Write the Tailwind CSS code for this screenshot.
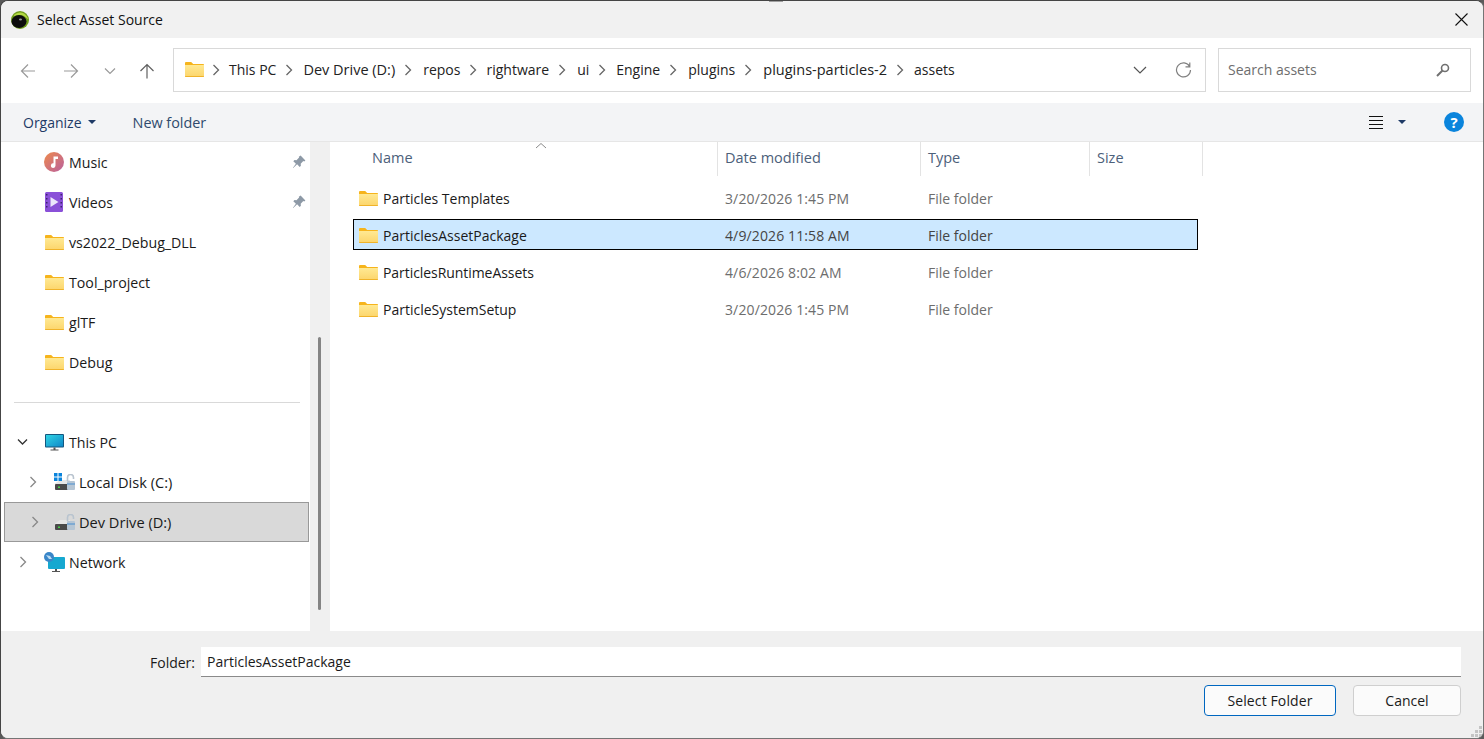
<!DOCTYPE html>
<html lang="en">
<head>
  <meta charset="UTF-8" />
  <title>Select Asset Source</title>
  <script src="https://cdn.jsdelivr.net/npm/@tailwindcss/browser@4"></script>
</head>
<body class="bg-[#5a5a5a] overflow-hidden font-['Open_Sans',sans-serif] text-[14px] text-[#1a1a1a]">
  <svg width="0" height="0" class="absolute">
    <defs>
      <linearGradient id="folderFill" x1="0" y1="0" x2="0" y2="1">
        <stop offset="0" stop-color="#ffe993" />
        <stop offset="1" stop-color="#fcd56b" />
      </linearGradient>
      <symbol id="folder" viewBox="0 0 19 15">
        <path d="M0 1.2C0 .5.5 0 1.2 0h5l2 2H18c.6 0 1 .4 1 1v1H0z" fill="#f6b41c" />
        <path d="M0 3h19v11c0 .6-.4 1-1 1H1c-.6 0-1-.4-1-1z" fill="url(#folderFill)" />
        <path d="M0 14h19v.2c0 .5-.4.8-.8.8H.8c-.4 0-.8-.3-.8-.8z" fill="#f0b32a" />
      </symbol>
      <symbol id="pin" viewBox="0 0 14 14">
        <path d="M8.6.6l4.8 4.8-1.2 1-.9-.3-2.6 2.6.2 2-1.2 1.2-2.6-2.6L1 13.2.8 13l3.1-4.2L1.300 6.200l1.200-1.200 2 .2 2.600-2.600-.300-.900z" fill="#8d99a6" />
      </symbol>
      <symbol id="chev" viewBox="0 0 10 14">
        <path d="M2.500 2l5 5-5 5" fill="none" stroke="currentColor" stroke-width="1.300" />
      </symbol>
      <symbol id="drive" viewBox="0 0 20 17">
        <path d="M0 9.500L5 6h10v9.500H0z" fill="#e6e6e6" />
        <rect x="0" y="10" width="17" height="6" rx="1" fill="#4a4a4a" />
        <rect x="3" y="12.500" width="2" height="1.500" fill="#46d246" />
        <path d="M12.500 7V3.500a3 3 0 0 1 6 0V5" fill="none" stroke="#b9c4cf" stroke-width="1.600" />
        <rect x="12" y="7" width="8" height="9" rx="1" fill="#b5c5d4" />
        <rect x="12" y="9.500" width="8" height="1" fill="#4a90d0" />
      </symbol>
    </defs>
  </svg>

  <div class="w-[1484px] h-[739px] flex flex-col rounded-lg overflow-hidden border border-[#757575] border-l-[#454545] border-t-[#454545] bg-[#f0f0f0] relative">
    <!-- title bar -->
    <div class="h-[37px] shrink-0 flex items-center pl-[10px] pr-[15px] bg-[#f1f1f1]">
      <svg width="18" height="18" viewBox="0 0 18 18">
        <circle cx="9" cy="9" r="9" fill="#6f9c1c" />
        <path d="M3 4a8.500 8.500 0 0 1 14 3.500c.5 2-3-3.500-8-3.500S3 6 3 4z" fill="#b4d944" />
        <ellipse cx="8" cy="10.500" rx="7.500" ry="6.500" fill="#0d0d0d" />
        <ellipse cx="9.500" cy="8.500" rx="1.500" ry="1" fill="#9a9a9a" />
      </svg>
      <span class="ml-[8px] text-[#111]">Select Asset Source</span>
      <svg class="ml-auto" width="13" height="13" viewBox="0 0 13 13"><path d="M.5.500l12 12M12.500.500l-12 12" stroke="#111" stroke-width="1.100" /></svg>
    </div>

    <!-- nav bar -->
    <div class="h-[65px] shrink-0 bg-white flex items-center pl-[19px] pr-[12px]">
      <svg width="16" height="16" viewBox="0 0 16 16"><path d="M15 8H1.500M8 1.500L1.500 8 8 14.500" fill="none" stroke="#9a9a9a" stroke-width="1.200" /></svg>
      <svg class="ml-[27px]" width="16" height="16" viewBox="0 0 16 16"><path d="M1 8h13.500M8 1.500L14.500 8 8 14.500" fill="none" stroke="#9a9a9a" stroke-width="1.200" /></svg>
      <svg class="ml-[25px]" width="12" height="8" viewBox="0 0 12 8"><path d="M1 1.500l5 5 5-5" fill="none" stroke="#9a9a9a" stroke-width="1.200" /></svg>
      <svg class="ml-[23px]" width="16" height="16" viewBox="0 0 16 16"><path d="M8 15.500V1.500M1.500 8L8 1.500 14.500 8" fill="none" stroke="#5f5f5f" stroke-width="1.200" /></svg>

      <div class="ml-[18px] mb-px w-[1033px] h-[44px] border border-[#d9d9d9] flex items-center pl-[11px] pb-px">
        <svg width="19" height="15"><use href="#folder" /></svg>
        <div class="flex items-center text-[#222] leading-[21px]">
          <svg class="ml-[7px] mr-[8px] text-[#666]" width="10" height="14"><use href="#chev" /></svg><span>This PC</span>
          <svg class="ml-[8px] mr-[9px] text-[#666]" width="10" height="14"><use href="#chev" /></svg><span class="text-[14.500px] leading-[21px]">Dev Drive (D:)</span>
          <svg class="ml-[8px] mr-[10px] text-[#666]" width="10" height="14"><use href="#chev" /></svg><span>repos</span>
          <svg class="ml-[8px] mr-[8px] text-[#666]" width="10" height="14"><use href="#chev" /></svg><span>rightware</span>
          <svg class="ml-[8px] mr-[10px] text-[#666]" width="10" height="14"><use href="#chev" /></svg><span>ui</span>
          <svg class="ml-[8px] mr-[9px] text-[#666]" width="10" height="14"><use href="#chev" /></svg><span>Engine</span>
          <svg class="ml-[8px] mr-[10px] text-[#666]" width="10" height="14"><use href="#chev" /></svg><span>plugins</span>
          <svg class="ml-[8px] mr-[10px] text-[#666]" width="10" height="14"><use href="#chev" /></svg><span class="text-[14.500px] leading-[21px]">plugins-particles-2</span>
          <svg class="ml-[8px] mr-[9px] text-[#666]" width="10" height="14"><use href="#chev" /></svg><span>assets</span>
        </div>
        <svg class="ml-auto" width="14" height="8" viewBox="0 0 14 8"><path d="M1 1l6 6 6-6" fill="none" stroke="#555" stroke-width="1.200" /></svg>
        <svg class="ml-[28px] mr-[13px]" width="17" height="17" viewBox="0 0 17 17"><path d="M14.800 1.500v4.300h-4.300M14.600 5.500A7 7 0 1 0 15.500 9" fill="none" stroke="#808080" stroke-width="1.200" /></svg>
      </div>

      <div class="ml-[12px] mb-px w-[253px] h-[44px] border border-[#d9d9d9] flex items-center pl-[9px] pr-[20px] pb-px text-[#6e6e6e]">
        <span>Search assets</span>
        <svg class="ml-auto" width="14" height="14" viewBox="0 0 14 14"><circle cx="9" cy="5" r="3.500" fill="none" stroke="#707070" stroke-width="1.600" /><path d="M6.500 7.500L1 13" stroke="#707070" stroke-width="2" /></svg>
      </div>
    </div>

    <!-- toolbar -->
    <div class="h-[39px] shrink-0 bg-[#f3f4f6] border-b border-[#e6e6e6] flex items-center pl-[22px] pr-[19px]">
      <span class="text-[#1e3a66]">Organize</span>
      <span class="ml-[6px] w-0 h-0 border-x-[4px] border-x-transparent border-t-[4px] border-t-[#1e3a66]"></span>
      <span class="ml-[37px] text-[14.400px] leading-[21px] text-[#2f4a6d]">New folder</span>
      <div class="ml-auto flex items-center">
        <svg width="14" height="13" viewBox="0 0 14 13"><path d="M0 .500h14M0 4.500h14M0 8.500h14M0 12.500h14" stroke="#111" /></svg>
        <span class="ml-[15px] w-0 h-0 border-x-[4px] border-x-transparent border-t-[4px] border-t-[#1e3a66]"></span>
        <span class="ml-[38px] w-5 h-5 rounded-full bg-[#0a84dc] text-white text-[15px] leading-5 font-bold text-center">?</span>
      </div>
    </div>

    <!-- body -->
    <div class="flex-1 flex min-h-0 bg-white">
      <!-- sidebar -->
      <div class="w-[309px] shrink-0 pl-[3px] flex flex-col text-[14.200px] leading-[21px]">
        <div class="h-10 flex items-center pl-[40px] pr-[4px]">
          <svg width="20" height="20" viewBox="0 0 20 20">
            <defs><linearGradient id="music" x1="0" y1="0" x2="1" y2="1"><stop offset="0" stop-color="#ee8a4c" /><stop offset="1" stop-color="#b9609f" /></linearGradient></defs>
            <circle cx="10" cy="10" r="10" fill="url(#music)" />
            <path d="M9.500 4.500h4.500v2.500h-2.500v6.500a2.300 2.300 0 1 1-2-2.200z" fill="#fff" />
          </svg>
          <span class="ml-[5px]">Music</span>
          <svg class="ml-auto" width="14" height="14"><use href="#pin" /></svg>
        </div>
        <div class="h-10 flex items-center pl-[41px] pr-[4px]">
          <svg width="18" height="20" viewBox="0 0 18 20">
            <rect width="18" height="20" rx="1.500" fill="#8a50d8" />
            <path d="M1 2h1.500v1.500H1zM1 6h1.500v1.500H1zM1 10h1.500v1.500H1zM1 14h1.500v1.500H1zM15.500 2H17v1.500h-1.500zM15.500 6H17v1.500h-1.500zM15.500 10H17v1.500h-1.500zM15.500 14H17v1.500h-1.500z" fill="#3c2470" />
            <path d="M5.500 5l8 5-8 5z" fill="#ece6fb" />
          </svg>
          <span class="ml-[6px]">Videos</span>
          <svg class="ml-auto" width="14" height="14"><use href="#pin" /></svg>
        </div>
        <div class="h-10 flex items-center pl-[41px]"><svg width="19" height="15"><use href="#folder" /></svg><span class="ml-[5px]">vs2022_Debug_DLL</span></div>
        <div class="h-10 flex items-center pl-[41px]"><svg width="19" height="15"><use href="#folder" /></svg><span class="ml-[5px]">Tool_project</span></div>
        <div class="h-10 flex items-center pl-[41px]"><svg width="19" height="15"><use href="#folder" /></svg><span class="ml-[5px]">glTF</span></div>
        <div class="h-10 flex items-center pl-[41px]"><svg width="19" height="15"><use href="#folder" /></svg><span class="ml-[5px]">Debug</span></div>
        <div class="h-10 flex items-center pl-[10px] pr-[10px]"><div class="h-px w-full bg-[#d9d9d9]"></div></div>
        <div class="h-10 flex items-center pl-[12px]">
          <svg width="13" height="8" viewBox="0 0 13 8"><path d="M2 1.500l4.500 4.500L11 1.500" fill="none" stroke="#333" stroke-width="1.300" /></svg>
          <svg class="ml-[16px]" width="19" height="17" viewBox="0 0 19 17">
            <defs><linearGradient id="screen" x1="0" y1="0" x2="1" y2="1"><stop offset="0" stop-color="#2fd4e4" /><stop offset="1" stop-color="#1088c8" /></linearGradient></defs>
            <rect width="19" height="13.500" rx="1" fill="#14577f" />
            <rect x="1" y="1" width="17" height="11.500" fill="url(#screen)" />
            <path d="M8.500 13.500h2v2h3v1h-8v-1h3z" fill="#555" />
          </svg>
          <span class="ml-[5px]">This PC</span>
        </div>
        <div class="h-10 flex items-center pl-[24px]">
          <svg class="text-[#888]" width="10" height="14"><use href="#chev" /></svg>
          <div class="ml-[17px] relative w-[20px] h-[17px]">
            <svg width="20" height="17"><use href="#drive" /></svg>
            <svg class="absolute -left-[1px] -top-[1px]" width="8" height="8" viewBox="0 0 8 8"><path d="M0 0h3.500v3.500H0zM4.500 0H8v3.500H4.500zM0 4.500h3.500V8H0zM4.500 4.500H8V8H4.500z" fill="#0a84dc" /></svg>
          </div>
          <span class="ml-[4px] text-[14.600px] leading-[21px]">Local Disk (C:)</span>
        </div>
        <div class="h-10 flex items-center pl-[23px] mr-px bg-[#d9d9d9] border border-[#999]">
          <svg class="ml-[2px] text-[#888]" width="10" height="14"><use href="#chev" /></svg>
          <svg class="ml-[15px]" width="20" height="17"><use href="#drive" /></svg>
          <span class="ml-[4px] text-[14.600px] leading-[21px]">Dev Drive (D:)</span>
        </div>
        <div class="h-10 flex items-center pl-[14px]">
          <svg class="text-[#888]" width="10" height="14"><use href="#chev" /></svg>
          <svg class="ml-[16px]" width="21" height="21" viewBox="0 0 21 21">
            <rect x="4" y="5" width="17" height="12" rx="1" fill="#16a8d0" />
            <path d="M11 17h2v2h3v1H8v-1h3z" fill="#555" />
            <circle cx="5" cy="5" r="5" fill="#3a86c8" />
            <path d="M2 3l4 1 2 3-3 0z" fill="#bcdcf2" />
          </svg>
          <span class="ml-[4px]">Network</span>
        </div>
      </div>

      <!-- sidebar scrollbar -->
      <div class="w-5 shrink-0 bg-[#f0f0f0] pt-[195px] pl-[8px] pb-[20px]">
        <div class="w-[3px] h-[273px] bg-[#858585] rounded-full"></div>
      </div>

      <!-- file list -->
      <div class="flex-1 min-w-0 pl-[23px] relative">
        <svg class="absolute left-[205px] top-0" width="12" height="7" viewBox="0 0 12 7"><path d="M1 6l5-4.500L11 6" fill="none" stroke="#8a8a8a" /></svg>
        <div class="h-[34px] flex text-[#4c607a] text-[14.500px]">
          <div class="w-[365px] pl-[19px] pb-[2px] border-r border-[#e3e3e3] flex items-center">Name</div>
          <div class="w-[203px] pl-[7px] pb-[2px] border-r border-[#e3e3e3] flex items-center">Date modified</div>
          <div class="w-[169px] pl-[7px] pb-[2px] border-r border-[#e3e3e3] flex items-center">Type</div>
          <div class="w-[113px] pl-[7px] pb-[2px] border-r border-[#e3e3e3] flex items-center">Size</div>
        </div>
        <div class="mt-[6px] flex flex-col gap-[6px] w-[845px]">
          <div class="h-[31px] pt-px flex items-center pl-[5px] border border-transparent">
            <svg width="19" height="15"><use href="#folder" /></svg>
            <span class="ml-[5px] w-[342px]">Particles Templates</span>
            <span class="w-[203px] text-[#6d6d6d] tracking-[0.120px]">3/20/2026 1:45 PM</span>
            <span class="text-[#6d6d6d]">File folder</span>
          </div>
          <div class="h-[31px] pt-px flex items-center pl-[5px] border border-black bg-[#cce8ff]">
            <svg width="19" height="15"><use href="#folder" /></svg>
            <span class="ml-[5px] w-[342px]">ParticlesAssetPackage</span>
            <span class="w-[203px] text-[#444] tracking-[0.120px]">4/9/2026 11:58 AM</span>
            <span class="text-[#444]">File folder</span>
          </div>
          <div class="h-[31px] pt-px flex items-center pl-[5px] border border-transparent">
            <svg width="19" height="15"><use href="#folder" /></svg>
            <span class="ml-[5px] w-[342px] tracking-[-0.060px]">ParticlesRuntimeAssets</span>
            <span class="w-[203px] text-[#6d6d6d] tracking-[0.120px]">4/6/2026 8:02 AM</span>
            <span class="text-[#6d6d6d]">File folder</span>
          </div>
          <div class="h-[31px] pt-px flex items-center pl-[5px] border border-transparent">
            <svg width="19" height="15"><use href="#folder" /></svg>
            <span class="ml-[5px] w-[342px]">ParticleSystemSetup</span>
            <span class="w-[203px] text-[#6d6d6d] tracking-[0.120px]">3/20/2026 1:45 PM</span>
            <span class="text-[#6d6d6d]">File folder</span>
          </div>
        </div>
      </div>
    </div>

    <!-- bottom panel -->
    <div class="h-[107px] shrink-0 bg-[#f0f0f0] pt-[16px] pr-[22px] flex flex-col">
      <div class="flex items-center justify-end">
        <span>Folder:</span>
        <div class="ml-[6px] w-[1260px] h-[30px] bg-white border-b border-[#8a8a8a] pl-[6px] flex items-center">ParticlesAssetPackage</div>
      </div>
      <div class="mt-[8px] flex justify-end gap-[17px]">
        <div class="w-[132px] h-[31px] bg-[#fbfbfb] border border-[#0067c0] rounded-[4px] flex items-center justify-center tracking-[0.120px]">Select Folder</div>
        <div class="w-[108px] h-[31px] bg-[#fbfbfb] border border-[#cfcfcf] rounded-[4px] flex items-center justify-center">Cancel</div>
      </div>
    </div>

    <!-- resize grip -->
    <svg class="absolute right-0 bottom-0" width="12" height="12" viewBox="0 0 12 12"><path d="M8 0h3v3H8zM4 4h3v3H4zM8 4h3v3H8zM0 8h3v3H0zM4 8h3v3H4zM8 8h3v3H8z" fill="#c4c4c4" /></svg>
    <!-- window edge notch -->
    <div class="absolute left-[768px] -top-px w-[14px] h-[2px] bg-[#a0a0a0]"></div>
  </div>
</body>
</html>
